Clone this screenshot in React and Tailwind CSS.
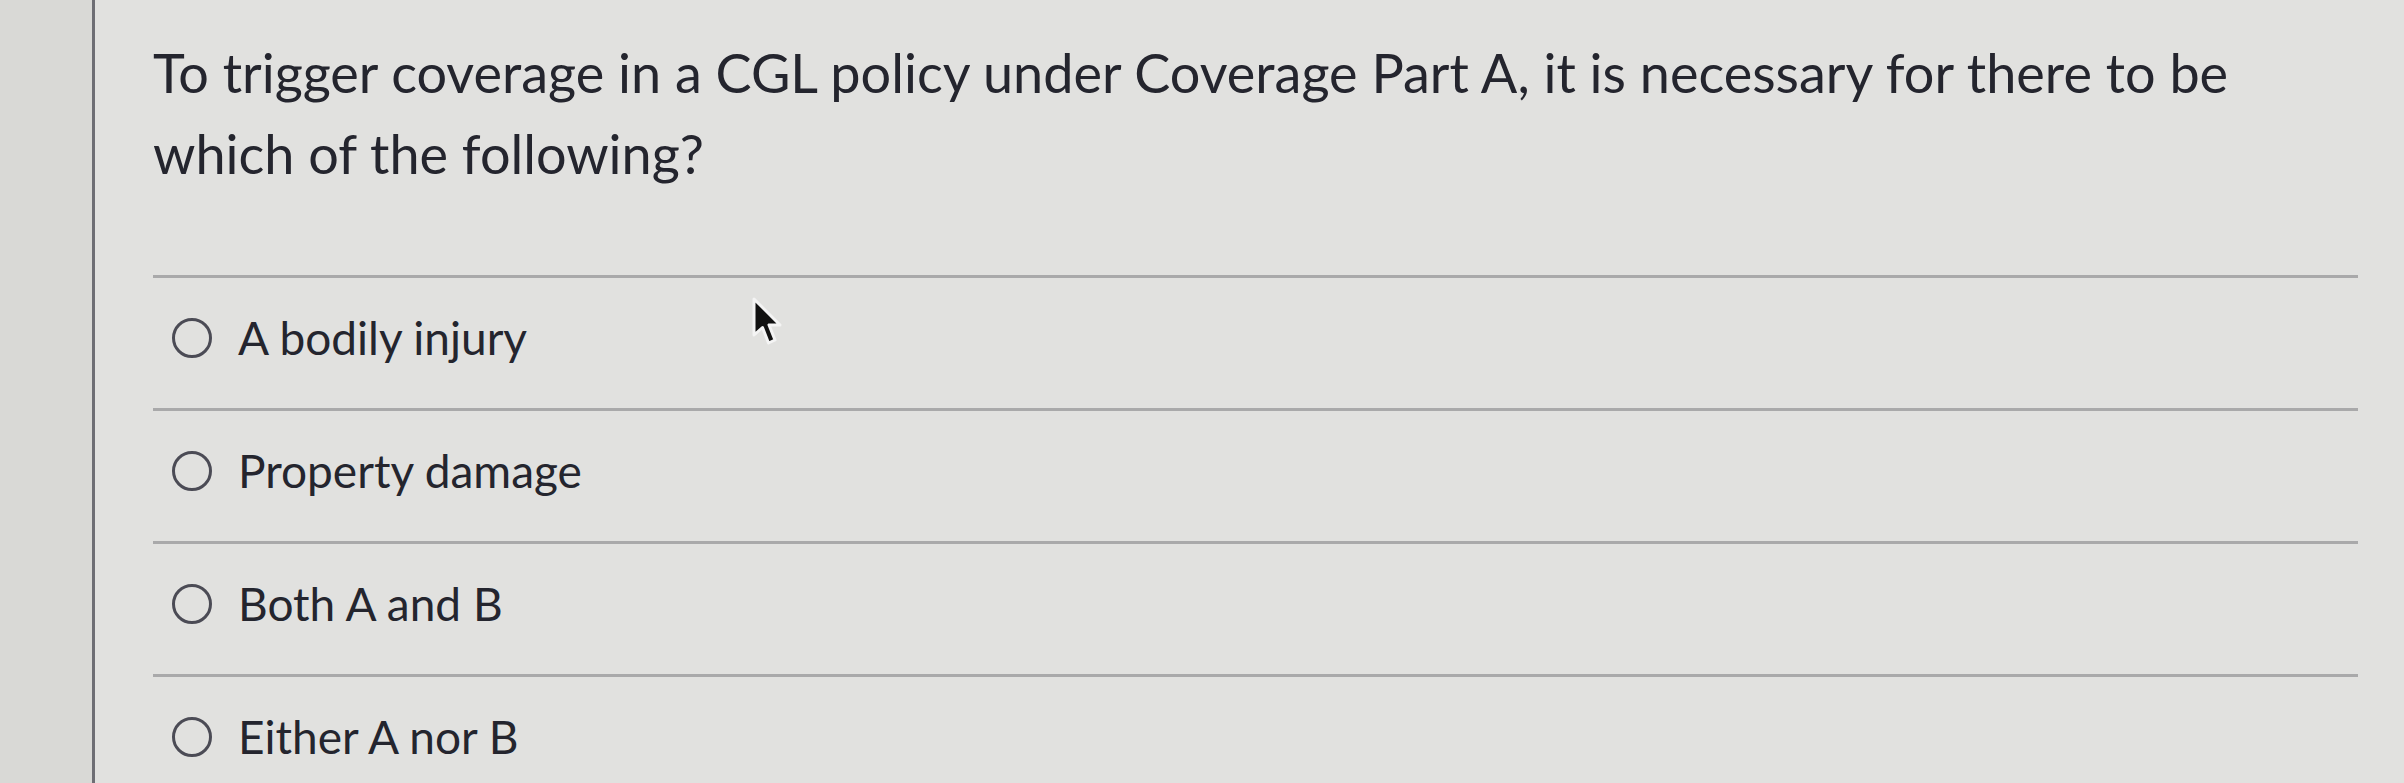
import React from "react";

const options = ["A bodily injury", "Property damage", "Both A and B", "Either A nor B"];

function Cursor() {
  return (
    <svg
      className="absolute left-[751px] top-[297px]"
      width="34"
      height="52"
      viewBox="0 0 34 52"
    >
      <path
        d="M3 2 L3 38 L11.5 30.5 L17.5 46 L24 43 L18 28 L29 28 Z"
        fill="#111"
        stroke="#f4f4f4"
        strokeWidth="3"
        strokeLinejoin="round"
      />
    </svg>
  );
}

export default function App() {
  return (
    <div
      className="relative flex h-[783px] w-full overflow-hidden bg-[#e1e1df] text-[#24252e]"
      style={{ fontFamily: "Lato, 'Open Sans', sans-serif" }}
    >
      <div className="w-[95px] shrink-0 border-r-[3px] border-[#6e6e74] bg-[#d9d9d6]" />
      <div className="flex min-w-0 flex-1 flex-col pl-[58px] pr-[46px]">
        <p className="pt-[32px] text-[54px] leading-[81px]">
          To trigger coverage in a CGL policy under Coverage Part A, it is necessary for there to be
          <br />
          which of the following?
        </p>
        <div className="mt-[81px] flex flex-col">
          {options.map((o) => (
            <div
              key={o}
              className="flex h-[133px] items-center gap-[26px] border-t-[3px] border-[#a9a9aa] pb-[10px] pl-[19px]"
            >
              <span className="h-[40px] w-[40px] shrink-0 rounded-full border-[3px] border-[#4b4b55]" />
              <span className="text-[46px] leading-none">{o}</span>
            </div>
          ))}
        </div>
      </div>
      <Cursor />
    </div>
  );
}
